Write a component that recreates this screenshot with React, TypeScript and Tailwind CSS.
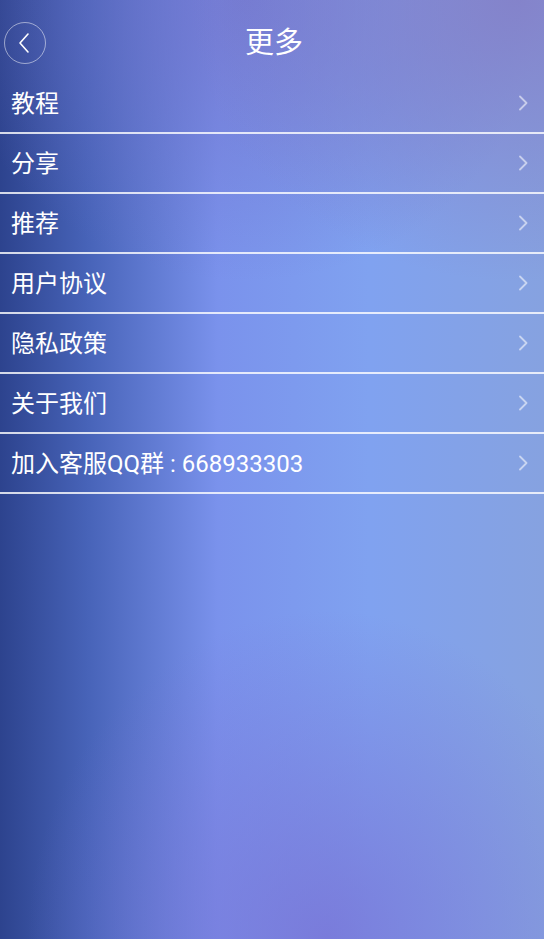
const items = ["教程", "分享", "推荐", "用户协议", "隐私政策", "关于我们", "加入客服QQ群 : 668933303"];

function ChevronRight() {
  return (
    <svg width="11" height="16" viewBox="0 0 11 16" fill="none" className="opacity-55">
      <path d="M2 1.5 L8.5 8 L2 14.5" stroke="white" strokeWidth="1.8" strokeLinecap="round" strokeLinejoin="round" />
    </svg>
  );
}

export default function App() {
  return (
    <div
      className="relative h-[939px] w-[544px] overflow-hidden text-white bg-[radial-gradient(ellipse_60%_30%_at_95%_0%,rgba(132,128,200,0.9),transparent),radial-gradient(ellipse_55%_35%_at_60%_100%,rgba(120,112,212,0.75),transparent),radial-gradient(ellipse_55%_30%_at_45%_0%,rgba(112,112,200,0.7),transparent),linear-gradient(to_right,#2d438e_0%,#4763b8_16%,#7a92ec_40%,#80a2f0_68%,#86a2e0_100%)]"
      style={{ fontFamily: "Roboto, 'Noto Sans CJK SC', sans-serif" }}
    >
      <header className="relative flex h-[74px] items-start justify-center pt-[22px]">
        <button className="absolute left-[4px] top-[22px] flex h-[42px] w-[42px] items-center justify-center rounded-full border border-white/50">
          <svg width="14" height="22" viewBox="0 0 14 22" fill="none" className="-ml-[2px]">
            <path d="M11 2 L3 11 L11 20" stroke="white" strokeWidth="1.6" strokeLinecap="round" strokeLinejoin="round" />
          </svg>
        </button>
        <h1 className="ml-[4px] h-[42px] text-[29px] leading-[42px]">更多</h1>
      </header>
      <ul>
        {items.map((label) => (
          <li key={label} className="flex h-[60px] items-center justify-between border-b-2 border-white/80 pl-[11px] pr-[15px]">
            <span className="mt-[2px] text-[24px] leading-none">{label}</span>
            <ChevronRight />
          </li>
        ))}
      </ul>
    </div>
  );
}
